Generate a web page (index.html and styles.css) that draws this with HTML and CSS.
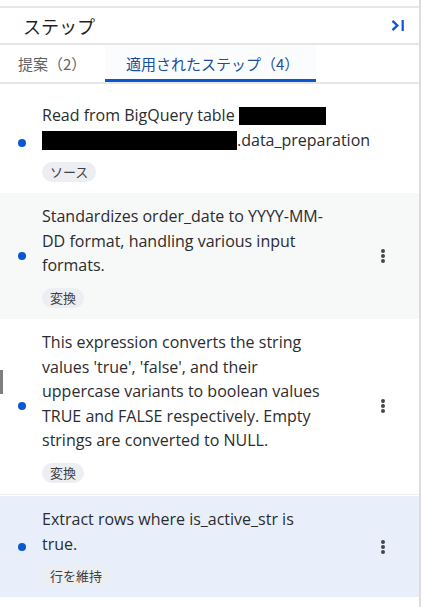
FILE: index.html
```html
<!DOCTYPE html>
<html lang="ja">
<head>
  <meta charset="UTF-8" />
  <meta name="viewport" content="width=device-width, initial-scale=1" />
  <title>ステップ</title>
  <link rel="stylesheet" href="styles.css">
</head>
<body>

<div class="panel">
  <div class="panel-head">
    <h2 class="panel-title">ステップ</h2>
    <button class="collapse-btn" title="閉じる">
      <svg width="14" height="13" viewBox="0 0 14 13">
        <path d="M1.5 1.8 L6.3 6.5 L1.5 11.2" fill="none" stroke="#0b57d0" stroke-width="2.4" />
        <rect x="10.6" y="1" width="2.2" height="11" fill="#0b57d0" />
      </svg>
    </button>
  </div>

  <div class="tabs">
    <div class="tab tab-first">提案（2）</div>
    <div class="tab tab-active">適用されたステップ（4）</div>
  </div>

  <ul class="steps">
    <li class="step">
      <span class="step-dot"></span>
      <div class="step-body">
        <div class="step-text">Read from BigQuery table <span class="redact redact-a"></span> <span class="nowrap"><span class="redact redact-b"></span>.data_preparation</span></div>
        <span class="chip">ソース</span>
      </div>
    </li>
    <li class="step step-grey">
      <span class="step-dot"></span>
      <div class="step-body">
        <div class="step-text">Standardizes order_date to YYYY-MM-DD format, handling various input formats.</div>
        <span class="chip">変換</span>
      </div>
      <button class="step-menu">
        <svg width="4" height="14" viewBox="0 0 4 14"><circle cx="2" cy="2" r="2" /><circle cx="2" cy="7" r="2" /><circle cx="2" cy="12" r="2" /></svg>
      </button>
    </li>
    <li class="step step-line">
      <span class="step-dot"></span>
      <div class="step-body">
        <div class="step-text">This expression converts the string values 'true', 'false', and their uppercase variants to boolean values TRUE and FALSE respectively. Empty strings are converted to NULL.</div>
        <span class="chip">変換</span>
      </div>
      <button class="step-menu">
        <svg width="4" height="14" viewBox="0 0 4 14"><circle cx="2" cy="2" r="2" /><circle cx="2" cy="7" r="2" /><circle cx="2" cy="12" r="2" /></svg>
      </button>
    </li>
    <li class="step step-selected">
      <span class="step-dot"></span>
      <div class="step-body">
        <div class="step-text">Extract rows where is_active_str is<br>true.</div>
        <span class="chip">行を維持</span>
      </div>
      <button class="step-menu">
        <svg width="4" height="14" viewBox="0 0 4 14"><circle cx="2" cy="2" r="2" /><circle cx="2" cy="7" r="2" /><circle cx="2" cy="12" r="2" /></svg>
      </button>
    </li>
  </ul>

  <div class="drag-handle"></div>
</div>

</body>
</html>
```

FILE: styles.css
```css
html, body {
  margin: 0; padding: 0; height: 100%;
  background: #fff; color: #1f1f1f;
  font-family: "Open Sans", "Noto Sans CJK JP", sans-serif;
}
.panel {
  position: relative;
  width: 421px;
  min-height: 100%;
  box-sizing: border-box;
  padding-top: 6px;
  border-right: 2px solid #dcdce0;
}
.panel-head {
  display: flex;
  align-items: center;
  justify-content: space-between;
  height: 35px;
  padding: 0 14px 0 23px;
  border-top: 2px solid #e6e6e8;
  border-bottom: 2px solid #e6e6e8;
}
.panel-title {
  margin: 0;
  font-family: "Noto Sans CJK JP", sans-serif;
  font-size: 18px;
  font-weight: 400;
  color: #1f1f1f;
}
.collapse-btn {
  border: none;
  background: none;
  padding: 0;
  display: flex;
  cursor: pointer;
}
.tabs {
  display: flex;
  height: 37px;
  border-bottom: 2px solid #e6e6e8;
}
.tab {
  display: flex;
  align-items: center;
  box-sizing: border-box;
  font-family: "Noto Sans CJK JP", sans-serif;
  font-size: 15px;
  color: #5f6368;
}
.tab-first {
  width: 105px;
  padding-left: 18px;
}
.tab-active {
  width: 211px;
  padding-left: 21px;
  color: #1b4f9e;
  background: #fbfcfd;
  border-bottom: 3px solid #0b57d0;
  padding-top: 3px;
}
.steps {
  list-style: none;
  margin: 0;
  padding: 8px 0 0;
}
.step {
  display: flex;
  align-items: center;
  padding: 11px 0;
}
.step-grey { background: #f7f8f8; }
.step-line { border-bottom: 1px solid #eff0f2; }
.step-selected { background: #e8effb; margin-top: 1px; }
.step-dot {
  flex: none;
  width: 8px;
  height: 8px;
  margin: 0 16px 0 18px;
  border-radius: 50%;
  background: #0b57d0;
}
.step-body {
  width: 296px;
  flex: none;
}
.step-text {
  font-size: 16px;
  line-height: 24.6px;
  color: #2b2c2f;
}
.nowrap { white-space: nowrap; }
.redact {
  display: inline-block;
  background: #000;
  vertical-align: -4px;
}
.redact-a { width: 87px; height: 18px; }
.redact-b { width: 195px; height: 19px; }
.chip {
  display: inline-block;
  margin-top: 10px;
  height: 20px;
  line-height: 20px;
  padding: 0 8px;
  border-radius: 10px;
  background: #eceef1;
  font-family: "Noto Sans CJK JP", sans-serif;
  font-size: 13px;
  color: #3c4043;
}
.step-menu {
  margin-left: auto;
  width: 73px;
  border: none;
  background: none;
  padding: 0;
  display: flex;
  justify-content: center;
  fill: #444746;
  cursor: pointer;
}
.drag-handle {
  position: absolute;
  left: 0;
  top: 370px;
  width: 3px;
  height: 24px;
  background: #7f7f7f;
}
```
